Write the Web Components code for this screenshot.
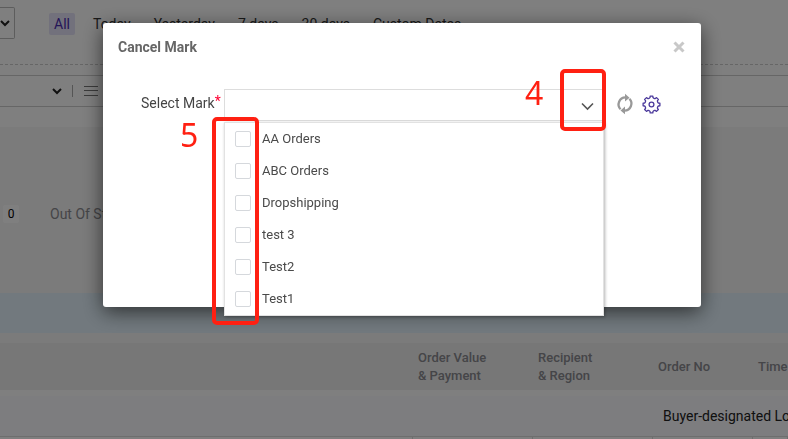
<!DOCTYPE html>
<html lang="en">
<head>
<meta charset="utf-8">
<meta name="viewport" content="width=device-width, initial-scale=1">
<title>Orders</title>
<style>
  body {
    margin: 0;
    min-height: 100vh;
    overflow: hidden;
    background: #fff;
    color: #333;
    font: 14px/20px Roboto, "Liberation Sans", sans-serif;
  }
</style>
</head>
<body>
<orders-page>
  <date-filter></date-filter>
  <search-bar></search-bar>
  <order-stats label="Out Of Stock" count="0"></order-stats>
  <order-table></order-table>
</orders-page>

<modal-dialog heading="Cancel Mark">
  <mark-field label="Select Mark" options="AA Orders,ABC Orders,Dropshipping,test 3,Test2,Test1"></mark-field>
  <step-box class="open" number="4" style="--x: 457px; --y: 46px; --w: 46px; --h: 62px; --nx: -39px; --ny: 4px"></step-box>
  <step-box class="tick" number="5" style="--x: 109px; --y: 94px; --w: 47px; --h: 208px; --nx: -36px; --ny: -2px"></step-box>
</modal-dialog>

<script>
class OrdersPage extends HTMLElement {
  constructor() {
    super();
    this.attachShadow({ mode: 'open' }).innerHTML = `
      <style>:host { display: block; }</style>
      <slot></slot>
    `;
  }
}

class DateFilter extends HTMLElement {
  constructor() {
    super();
    this.attachShadow({ mode: 'open' });
  }

  connectedCallback() {
    const ranges = ['All', 'Today', 'Yesterday', '7 days', '30 days', 'Custom Dates'];
    this.shadowRoot.innerHTML = `
      <style>
        :host {
          display: flex;
          height: 65px;
          box-sizing: border-box;
          padding-top: 7px;
          border-bottom: 1px dashed #ccc;
        }
        .select {
          display: flex;
          align-items: center;
          justify-content: flex-end;
          box-sizing: border-box;
          width: 15px;
          height: 32px;
          padding: 0 4px 0 0;
          border: 1px solid #bbb;
          border-left: 0;
          border-radius: 0 2px 2px 0;
          background: none;
        }
        nav { display: flex; gap: 13px; padding: 6px 0 0 34px; }
        nav button {
          height: 22px;
          padding: 0 5px;
          border: 0;
          border-radius: 2px;
          background: none;
          color: #333;
          font: inherit;
          white-space: nowrap;
        }
        nav .active { background: #e4e2f8; color: #4a2bb0; }
      </style>
      <button class="select" aria-label="Date type">
        <svg width="10" height="8" viewBox="0 0 10 8" fill="none" stroke="#222" stroke-width="2"><path d="M1 2l4 4 4-4"/></svg>
      </button>
      <nav>${ranges.map((r, i) => `<button class="${i === 0 ? 'active' : ''}">${r}</button>`).join('')}</nav>
    `;
  }
}

class SearchBar extends HTMLElement {
  constructor() {
    super();
    this.attachShadow({ mode: 'open' }).innerHTML = `
      <style>
        :host { display: block; padding: 10px 0 20px; }
        .bar {
          display: flex;
          align-items: center;
          height: 30px;
          border: solid #ccc;
          border-width: 1px 0;
        }
        button { display: flex; padding: 0; border: 0; background: none; }
        .more { width: 62px; justify-content: flex-end; }
        .line { width: 1px; height: 12px; margin: 0 11px 0 10px; background: #aaa; }
      </style>
      <div class="bar">
        <button class="more" aria-label="More">
          <svg width="10" height="8" viewBox="0 0 10 8" fill="none" stroke="#222" stroke-width="2"><path d="M1 2l4 4 4-4"/></svg>
        </button>
        <span class="line"></span>
        <button aria-label="List">
          <svg width="14" height="12" viewBox="0 0 14 12" stroke="#777"><path d="M0 1.5h14M0 5.5h14M0 10.5h14"/></svg>
        </button>
      </div>
    `;
  }
}

class OrderStats extends HTMLElement {
  constructor() {
    super();
    this.attachShadow({ mode: 'open' });
  }

  connectedCallback() {
    this.shadowRoot.innerHTML = `
      <style>
        :host { display: block; background: #f6f6f6; padding-bottom: 10px; }
        .row {
          display: flex;
          align-items: center;
          gap: 31px;
          height: 166px;
          padding: 8px 0 0 3px;
          box-sizing: border-box;
        }
        .count {
          width: 16px;
          height: 18px;
          border-radius: 2px;
          background: #fff;
          font-size: 12px;
          line-height: 18px;
          text-align: center;
          color: #000;
        }
        .label { color: #8b8b90; }
        .notice { height: 40px; background: #e4f3fc; }
      </style>
      <div class="row">
        <span class="count">${this.getAttribute('count')}</span>
        <span class="label">${this.getAttribute('label')}</span>
      </div>
      <div class="notice"></div>
    `;
  }
}

class OrderTable extends HTMLElement {
  constructor() {
    super();
    this.attachShadow({ mode: 'open' }).innerHTML = `
      <style>
        :host { display: block; }
        table { width: 100%; border-spacing: 0; table-layout: fixed; }
        th {
          height: 47px;
          padding: 0 0 0 5px;
          background: #eee;
          color: #8a8a90;
          font-size: 13px;
          font-weight: 500;
          line-height: 18px;
          text-align: left;
        }
        td { padding: 0; }
        .gap td { height: 6px; }
        .group td { height: 40px; padding-left: 10px; background: #fafafe; white-space: nowrap; color: #222; }
        .cells td { height: 40px; border: solid #ddd; border-width: 1px 1px 0 0; }
      </style>
      <table>
        <colgroup>
          <col style="width: 413px"><col style="width: 120px"><col style="width: 120px"><col style="width: 100px"><col>
        </colgroup>
        <thead>
          <tr><th></th><th>Order Value<br>&amp; Payment</th><th>Recipient<br>&amp; Region</th><th>Order No</th><th>Time</th></tr>
        </thead>
        <tbody>
          <tr class="gap"><td colspan="5"></td></tr>
          <tr class="group"><td colspan="3"></td><td colspan="2">Buyer-designated Logistics</td></tr>
          <tr class="cells"><td></td><td></td><td></td><td></td><td></td></tr>
        </tbody>
      </table>
    `;
  }
}

class ModalDialog extends HTMLElement {
  constructor() {
    super();
    this.attachShadow({ mode: 'open' });
  }

  connectedCallback() {
    this.shadowRoot.innerHTML = `
      <style>
        :host {
          display: block;
          position: fixed;
          inset: 0;
          padding: 23px 0 0 16px;
          background: rgba(0, 0, 0, .5);
        }
        .dialog {
          position: relative;
          max-width: 598px;
          margin: 0 auto;
          padding-bottom: 186px;
          border-radius: 3px;
          background: #fff;
          box-shadow: 0 5px 20px rgba(0, 0, 0, .6);
        }
        header {
          display: flex;
          align-items: center;
          justify-content: space-between;
          height: 48px;
          padding: 0 16px 0 15px;
        }
        h2 { margin: 0; font-size: 14px; font-weight: 700; color: #666; }
        header button { display: flex; padding: 0; border: 0; background: none; }
        .body { padding-top: 18px; }
      </style>
      <div class="dialog" role="dialog" aria-label="${this.getAttribute('heading')}">
        <header>
          <h2>${this.getAttribute('heading')}</h2>
          <button aria-label="Close">
            <svg width="12" height="12" viewBox="0 0 12 12" stroke="#c8c8c8" stroke-width="3"><path d="M1.5 1.5l9 9M10.5 1.5l-9 9"/></svg>
          </button>
        </header>
        <div class="body"><slot></slot></div>
      </div>
    `;
  }
}

class MarkField extends HTMLElement {
  constructor() {
    super();
    this.attachShadow({ mode: 'open' });
  }

  connectedCallback() {
    const options = this.getAttribute('options').split(',');
    // eight-toothed outline, teeth at every 45 degrees
    const teeth = [];
    for (let i = 0; i < 8; i++) {
      for (const [r, d] of [[6.7, -18], [7.1, -12], [8.5, -9], [8.5, 9], [7.1, 12], [6.7, 18]]) {
        const a = (i * 45 + d) * Math.PI / 180;
        teeth.push(`${(9.5 + r * Math.sin(a)).toFixed(2)},${(9.5 - r * Math.cos(a)).toFixed(2)}`);
      }
    }

    this.shadowRoot.innerHTML = `
      <style>
        :host { display: flex; align-items: flex-start; padding-left: 38px; }
        .label { flex: 0 0 83px; line-height: 28px; white-space: nowrap; color: #444; }
        .label span { color: #f03; line-height: 20px; vertical-align: 2px; }
        .combo { position: relative; flex: 0 1 380px; min-width: 0; }
        .box { display: flex; height: 30px; border: 1px solid #ddd; }
        .box input { flex: 1; min-width: 0; padding: 0 8px; border: 0; outline: 0; background: none; font: inherit; }
        button { display: flex; align-items: center; padding: 0; border: 0; background: none; }
        .box button { padding: 2px 9px 0; }
        .menu {
          position: absolute;
          top: 33px;
          left: 0;
          right: 0;
          margin: 0;
          padding: 0;
          list-style: none;
          border: 1px solid #e2e2e2;
          box-shadow: 1px 1px 3px rgba(0, 0, 0, .3);
          background: #fff;
        }
        .menu li { padding: 0 10px; }
        .menu label { display: flex; align-items: center; gap: 11px; height: 32px; font-size: 13px; color: #4a4a4a; }
        .menu input {
          appearance: none;
          width: 16px;
          height: 16px;
          margin: 0;
          border: 1px solid #d5d8dc;
          border-radius: 2px;
          background: #fff;
        }
        .tools { display: flex; align-items: center; gap: 8px; height: 30px; padding-left: 12px; }
      </style>
      <label class="label" for="mark">${this.getAttribute('label')}<span>*</span></label>
      <div class="combo">
        <div class="box">
          <input id="mark" type="text" autocomplete="off">
          <button aria-label="Show options">
            <svg width="13" height="9" viewBox="0 0 13 9" fill="none" stroke="#555" stroke-width="1.6"><path d="M1 1.5l5.5 5.5L12 1.5"/></svg>
          </button>
        </div>
        <ul class="menu">
          ${options.map(o => `<li><label><input type="checkbox">${o}</label></li>`).join('')}
        </ul>
      </div>
      <div class="tools">
        <button aria-label="Refresh">
          <svg width="18" height="22" viewBox="0 0 18 22" fill="none" stroke="#999" stroke-width="2.3">
            <path d="M4.6 16.3A7 7 0 0 1 9.5 4.4M13.4 5.7A7 7 0 0 1 8.5 17.6"/>
            <path d="M9 .8l4.5 4L9 8.6zM9 13.4l-4.5 4L9 21.2z" fill="#999" stroke="none"/>
          </svg>
        </button>
        <button aria-label="Settings">
          <svg width="19" height="19" viewBox="0 0 19 19" fill="none" stroke="#4c3a9c" stroke-width="1.3" stroke-linejoin="round">
            <polygon points="${teeth.join(' ')}"/><circle cx="9.5" cy="9.5" r="2.4"/>
          </svg>
        </button>
      </div>
    `;
  }
}

// numbered red outline over a part of the dialog
class StepBox extends HTMLElement {
  constructor() {
    super();
    this.attachShadow({ mode: 'open' });
  }

  connectedCallback() {
    this.shadowRoot.innerHTML = `
      <style>
        :host {
          display: block;
          position: absolute;
          left: var(--x);
          top: var(--y);
          width: var(--w);
          height: var(--h);
          box-sizing: border-box;
          border: 4px solid #ff2012;
          border-radius: 5px;
          pointer-events: none;
        }
        span {
          position: absolute;
          left: var(--nx);
          top: var(--ny);
          color: #ff2012;
          font: 32px/32px "Noto Sans", sans-serif;
        }
      </style>
      <span>${this.getAttribute('number')}</span>
    `;
  }
}

customElements.define('orders-page', OrdersPage);
customElements.define('date-filter', DateFilter);
customElements.define('search-bar', SearchBar);
customElements.define('order-stats', OrderStats);
customElements.define('order-table', OrderTable);
customElements.define('modal-dialog', ModalDialog);
customElements.define('mark-field', MarkField);
customElements.define('step-box', StepBox);
</script>
</body>
</html>
